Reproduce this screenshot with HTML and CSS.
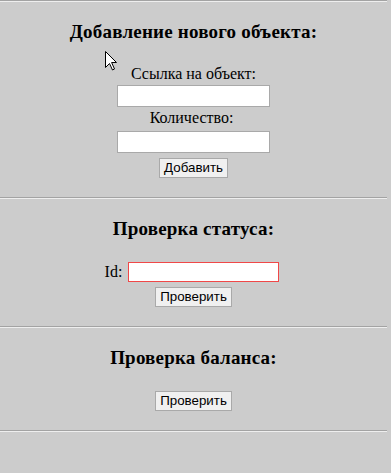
FILE: index.html
```html
<!DOCTYPE html>
<html lang="ru">
<head>
<meta charset="utf-8">
<title>Объекты</title>
<link rel="stylesheet" href="styles.css">
</head>
<body>
<div class="page">
  <hr class="rule">
  <section class="block">
    <h3 class="title">Добавление нового объекта:</h3>
    <div class="form">
      <label class="label">Ссылка на объект:</label>
      <input class="field field-1" type="text">
      <label class="label label-2">Количество:</label>
      <input class="field field-2" type="text">
      <button class="btn btn-add" type="button">Добавить</button>
    </div>
  </section>
  <hr class="rule">
  <section class="block">
    <h3 class="title">Проверка статуса:</h3>
    <div class="form">
      <div class="row">
        <label class="label">Id:</label>
        <input class="field field-id" type="text">
      </div>
      <button class="btn btn-check" type="button">Проверить</button>
    </div>
  </section>
  <hr class="rule">
  <section class="block">
    <h3 class="title">Проверка баланса:</h3>
    <div class="form">
      <button class="btn" type="button">Проверить</button>
    </div>
  </section>
  <hr class="rule">
  <svg class="cursor" width="13" height="20" viewBox="0 0 13 20" aria-hidden="true">
    <path d="M0.5 0.5 L0.5 16.5 L4.5 12.5 L7.5 19 L9.5 18 L6.6 11.5 L11.5 11.5 Z" fill="#fff" stroke="#000" stroke-width="1" stroke-linejoin="miter"/>
  </svg>
</div>
</body>
</html>
```

FILE: styles.css
```css
html, body {
  margin: 0;
  padding: 0;
  background: #cccccc;
}
body {
  font-family: "Liberation Serif", "Times New Roman", serif;
  color: #000;
}
.page {
  position: relative;
  width: 387px;
  min-height: 473px;
}
.rule {
  margin: 0;
  height: 0;
  border: 0;
  border-top: 1px solid #a3a3a3;
  border-bottom: 1px solid #eeeeee;
}
.block {
  padding: 19px 0 19px 0;
  text-align: center;
}
.title {
  margin: 0 0 22px 0;
  font-size: 19px;
  letter-spacing: 0.2px;
  line-height: 22px;
  font-weight: bold;
}
.form {
  display: flex;
  flex-direction: column;
  align-items: center;
}
.label {
  font-size: 16px;
  line-height: 18px;
}
.label-2 {
  margin-top: 2px;
  margin-right: 4px;
}
.field {
  box-sizing: border-box;
  width: 153px;
  height: 22px;
  margin: 0;
  padding: 1px 2px;
  border: 1px solid #a9a9a9;
  background: #fff;
  font-size: 13px;
}
.field-1 {
  margin-top: 2px;
}
.field-2 {
  margin-top: 4px;
}
.row {
  display: flex;
  align-items: center;
  gap: 6px;
  margin-right: 3px;
}
.field-id {
  width: 151px;
  height: 20px;
  border-color: #f04848;
}
.btn {
  box-sizing: border-box;
  height: 20px;
  padding: 0 4px;
  margin: 0;
  font-family: "Liberation Sans", Arial, sans-serif;
  font-size: 13.33px;
  line-height: 18px;
  color: #000;
  background: #f0f0f0;
  border: 1px solid #a9a9a9;
  border-radius: 0;
}
.btn-add {
  margin-top: 5px;
}
.btn-check {
  margin-top: 5px;
}
.cursor {
  position: absolute;
  left: 105px;
  top: 51px;
}
```
